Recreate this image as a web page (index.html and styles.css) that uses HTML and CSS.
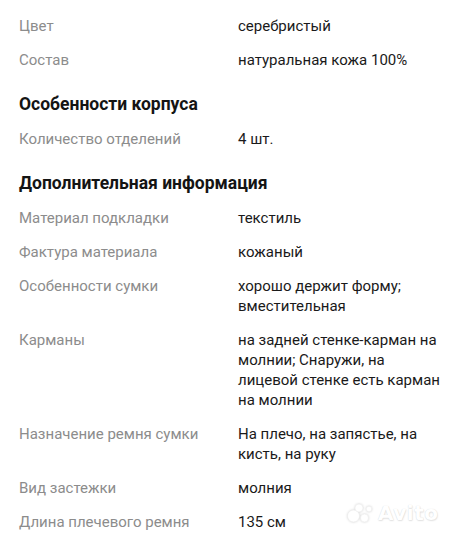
FILE: index.html
```html
<!DOCTYPE html>
<html lang="ru">
<head>
<meta charset="utf-8">
<link rel="stylesheet" href="styles.css">
</head>
<body>
<div class="page">
  <div class="group">
    <div class="row"><div class="label">Цвет</div><div class="value">серебристый</div></div>
    <div class="row"><div class="label">Состав</div><div class="value">натуральная кожа 100%</div></div>
  </div>
  <h2 class="heading">Особенности корпуса</h2>
  <div class="group">
    <div class="row"><div class="label">Количество отделений</div><div class="value">4 шт.</div></div>
  </div>
  <h2 class="heading">Дополнительная информация</h2>
  <div class="group">
    <div class="row"><div class="label">Материал подкладки</div><div class="value">текстиль</div></div>
    <div class="row"><div class="label">Фактура материала</div><div class="value">кожаный</div></div>
    <div class="row"><div class="label">Особенности сумки</div><div class="value">хорошо держит форму;<br>вместительная</div></div>
    <div class="row"><div class="label">Карманы</div><div class="value">на задней стенке-карман на<br>молнии; Снаружи, на<br>лицевой стенке есть карман<br>на молнии</div></div>
    <div class="row"><div class="label">Назначение ремня сумки</div><div class="value">На плечо, на запястье, на<br>кисть, на руку</div></div>
    <div class="row"><div class="label">Вид застежки</div><div class="value">молния</div></div>
    <div class="row"><div class="label">Длина плечевого ремня</div><div class="value">135 см</div></div>
  </div>
</div>
<div class="watermark">
  <svg class="wm-dots" width="32" height="20" viewBox="0 0 32 20">
    <circle cx="8.5" cy="13" r="6"/>
    <circle cx="19.5" cy="15" r="4"/>
    <circle cx="14" cy="5" r="4"/>
    <circle cx="24" cy="6" r="2.8"/>
  </svg>
  <span class="wm-text">Avito</span>
</div>
</body>
</html>
```

FILE: styles.css
```css
* { box-sizing: border-box; }
html, body {
  margin: 0;
  padding: 0;
  background: #ffffff;
}
body {
  font-family: Roboto, "Noto Sans", "DejaVu Sans", sans-serif;
  font-size: 15px;
  line-height: 20px;
  color: #1e1e1e;
  width: 453px;
  height: 540px;
  overflow: hidden;
  position: relative;
}
.page {
  padding: 16px 8px 0 19px;
}
.group {
  display: flex;
  flex-direction: column;
  gap: 14px;
}
.row {
  display: grid;
  grid-template-columns: 219px 1fr;
}
.label {
  color: #8c8c8c;
}
.value {
  color: #1a1a1a;
  white-space: nowrap;
}
.heading {
  margin: 0;
  font-size: 17.5px;
  line-height: 22px;
  font-weight: 700;
  color: #141414;
  padding: 23px 0 14px 0;
}
.watermark {
  position: absolute;
  left: 345px;
  top: 503px;
  display: flex;
  align-items: center;
  gap: 1px;
}
.wm-dots {
  filter: drop-shadow(0 0 1px #d8d8d8);
}
.wm-dots circle {
  fill: #ffffff;
  stroke: #ececec;
  stroke-width: 0.6;
}
.wm-text {
  font-family: "DejaVu Sans", sans-serif;
  font-size: 20px;
  font-weight: 700;
  color: #ffffff;
  text-shadow: 0 0 1px #d6d6d6, 0.5px 0.5px 1.5px #e2e2e2;
  letter-spacing: 0.5px;
}
```
